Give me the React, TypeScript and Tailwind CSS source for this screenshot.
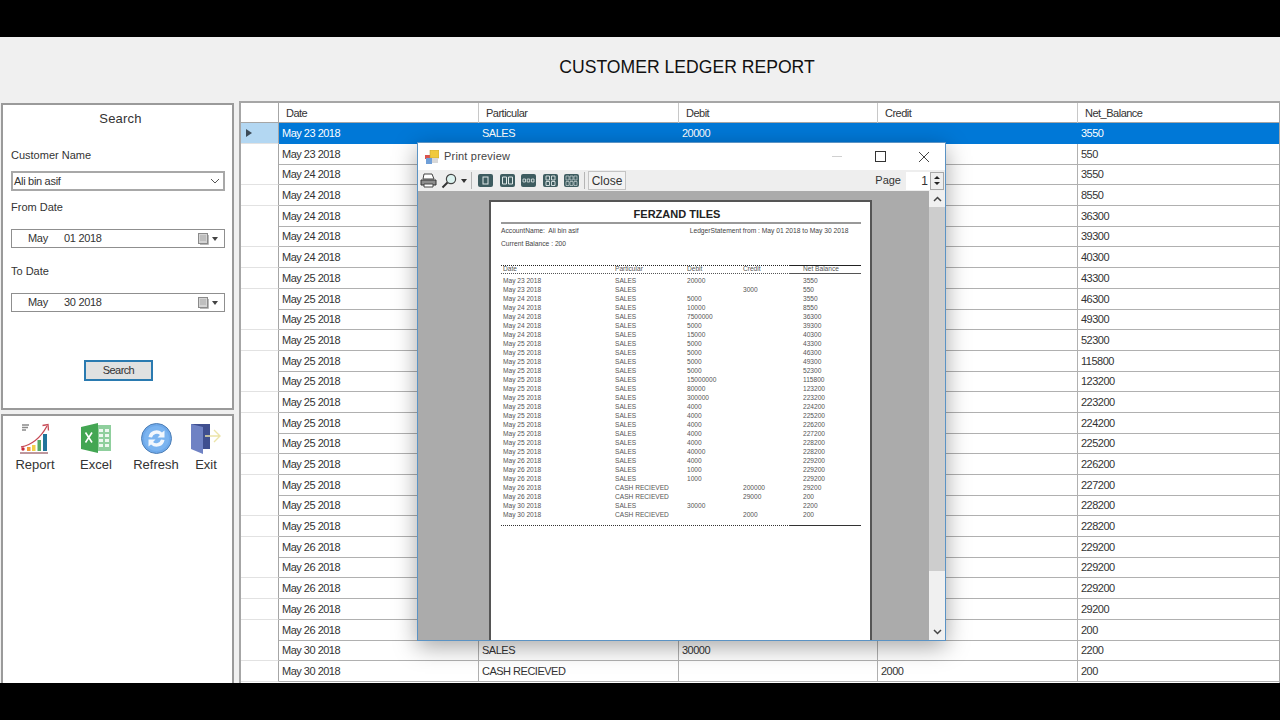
import React from "react";

const font = "font-['Liberation_Sans',Arial,sans-serif]";

type Row = { date: string; part: string; debit: string; credit: string; net: string };

const dates = [
  ...Array(2).fill("May 23 2018"),
  ...Array(5).fill("May 24 2018"),
  ...Array(13).fill("May 25 2018"),
  ...Array(5).fill("May 26 2018"),
  ...Array(2).fill("May 30 2018"),
];
const debits = ["20000", "", "5000", "10000", "7500000", "5000", "15000", "5000", "5000", "5000", "5000", "15000000", "80000", "300000", "4000", "4000", "4000", "4000", "4000", "40000", "4000", "1000", "1000", "", "", "30000", ""];
const credits: Record<number, string> = { 1: "3000", 23: "200000", 24: "29000", 26: "2000" };
const nets = ["3550", "550", "3550", "8550", "36300", "39300", "40300", "43300", "46300", "49300", "52300", "115800", "123200", "223200", "224200", "225200", "226200", "227200", "228200", "228200", "229200", "229200", "229200", "29200", "200", "2200", "200"];

const rows: Row[] = dates.map((date, i) => ({
  date,
  part: i === 23 || i === 24 || i === 26 ? "CASH RECIEVED" : "SALES",
  debit: debits[i],
  credit: credits[i] || "",
  net: nets[i],
}));

// rows 1..24 of the grid sit behind the print preview window
const isCovered = (i: number) => i > 0 && i < 25;

const gridCols = "grid grid-cols-[38px_200px_200px_199px_200px_201px]";

function CalendarButton() {
  return (
    <div className="ml-auto mr-[6px] flex items-center gap-[3px]">
      <svg width="11" height="12" viewBox="0 0 11 12">
        <rect x="0.5" y="0.5" width="9" height="10" fill="#d4d4d4" stroke="#8a8a8a" />
        <path d="M2 3h6M2 5h6M2 7h6" stroke="#a8a8a8" />
        <path d="M10.5 2v9.5H2" fill="none" stroke="#b8b8b8" />
      </svg>
      <div className="w-0 h-0 border-x-[3.5px] border-x-transparent border-t-[4px] border-t-[#444]" />
    </div>
  );
}

function DateField({ month, rest }: { month: string; rest: string }) {
  return (
    <div className="ml-[8px] mr-[7px] mt-[15px] h-[19px] border border-[#8f8f8f] bg-white flex items-center text-[11px] tracking-[-0.3px] text-[#333]">
      <span className="ml-[16px] w-[36px]">{month}</span>
      <span>{rest}</span>
      <CalendarButton />
    </div>
  );
}

function ReportIcon() {
  return (
    <svg width="32" height="32" viewBox="0 0 32 32">
      <path d="M3 3h7M3 5.5h6M3 8h4" stroke="#8b8b8b" strokeWidth="1.4" />
      <path d="M2 25C12 23 21 17 28 4" fill="none" stroke="#c64a55" strokeWidth="1.3" />
      <path d="M23.5 3.5L29 2.5L29.5 8.5" fill="none" stroke="#c64a55" strokeWidth="1.3" />
      <circle cx="4" cy="27" r="1.7" fill="#c9283a" />
      <rect x="8" y="25" width="3.5" height="4" fill="#ef9b3a" />
      <rect x="13" y="23" width="3.5" height="6" fill="#f2cf4a" />
      <rect x="18.5" y="18" width="3.5" height="11" fill="#55a866" />
      <rect x="24" y="12" width="4" height="17" fill="#21759b" />
      <path d="M1 31h28" stroke="#7c2f3a" strokeWidth="1" />
    </svg>
  );
}

function ExcelIcon() {
  return (
    <svg width="32" height="30" viewBox="0 0 32 30">
      <path d="M16 2h15v26H16z" fill="#8fcf9d" />
      <path d="M19 6h4v3h-4zM25 6h4v3h-4zM19 11h4v3h-4zM25 11h4v3h-4zM19 16h4v3h-4zM25 16h4v3h-4zM19 21h4v3h-4zM25 21h4v3h-4z" fill="#eef8f0" />
      <path d="M1 4L18 0v30L1 26z" fill="#43a653" />
      <path d="M5.5 9.5l6.5 10M12 9.5l-6.5 10" stroke="#fff" strokeWidth="1.6" />
    </svg>
  );
}

function RefreshIcon() {
  return (
    <svg width="31" height="31" viewBox="0 0 31 31">
      <circle cx="15.5" cy="15.5" r="15" fill="#6ea9ea" stroke="#4f7fb5" />
      <circle cx="15.5" cy="15.5" r="12.5" fill="#7bb4f0" />
      <path d="M7.5 14A8 8 0 0 1 21 9.5L23.5 7.5V14.5H16.5L19 12A5 5 0 0 0 11 14.5z" fill="#f2f7fd" />
      <path d="M23.5 17A8 8 0 0 1 10 21.5L7.5 23.5V16.5H14.5L12 19A5 5 0 0 0 20 16.5z" fill="#f2f7fd" />
    </svg>
  );
}

function ExitIcon() {
  return (
    <svg width="32" height="31" viewBox="0 0 32 31">
      <path d="M1 1h19v25H13z" fill="#3f4f8f" />
      <path d="M1 1l12 3v27L1 26z" fill="#6f82c4" />
      <path d="M15 13h15M24 7l6 6-6 6" fill="none" stroke="#ece4a8" strokeWidth="1.4" />
    </svg>
  );
}

function ToolIcon({ children }: { children: React.ReactNode }) {
  return (
    <svg width="15" height="13" viewBox="0 0 15 13">
      <rect width="15" height="13" rx="2" fill="#3e5c60" />
      {children}
    </svg>
  );
}

function PrintPreview() {
  const repCols = "grid grid-cols-[112px_72px_56px_60px_58px]";
  return (
    <div className="absolute left-[176px] top-[39px] w-[529px] h-[499px] bg-white border border-[#5b93c4] shadow-[0_6px_22px_rgba(0,0,0,0.35)] flex flex-col tracking-normal">
      {/* title bar */}
      <div className="h-[27px] flex items-center shrink-0">
        <svg className="ml-[7px]" width="14" height="14" viewBox="0 0 14 14">
          <rect x="0" y="5" width="6" height="4" fill="#d9534f" />
          <rect x="5" y="0" width="9" height="8" fill="#f0c93c" stroke="#b99a2e" strokeWidth="0.5" />
          <rect x="1" y="8" width="6" height="6" fill="#6f9fd8" />
          <rect x="7" y="8" width="6" height="5" fill="#d8d8d8" />
        </svg>
        <span className="ml-[5px] text-[11px] tracking-[0.2px] text-[#444]">Print preview</span>
        <div className="ml-auto mr-[33px] w-[10px] h-px bg-[#d0d0d0]" />
        <div className="mr-[32px] w-[11px] h-[11px] border border-[#333]" />
        <svg className="mr-[15px]" width="12" height="12" viewBox="0 0 12 12">
          <path d="M1 1l10 10M11 1L1 11" stroke="#444" strokeWidth="1" />
        </svg>
      </div>
      {/* toolbar */}
      <div className="h-[21px] bg-[#eeeeee] flex items-center shrink-0 text-[12px] text-[#333]">
        <svg className="ml-[2px]" width="17" height="15" viewBox="0 0 17 15">
          <path d="M4 1h8l2 5H3z" fill="#fff" stroke="#444" />
          <path d="M1 7h15v5H1z" fill="#8d8d8d" stroke="#333" />
          <path d="M4 11h9v3H4z" fill="#fff" stroke="#444" />
        </svg>
        <svg className="ml-[4px]" width="16" height="16" viewBox="0 0 16 16">
          <circle cx="10" cy="6" r="4.6" fill="#dcf2ef" stroke="#444" strokeWidth="1.2" />
          <path d="M6.5 9.5L1.5 14.5" stroke="#333" strokeWidth="2" />
        </svg>
        <div className="ml-[4px] w-0 h-0 border-x-[3.5px] border-x-transparent border-t-[4px] border-t-[#333]" />
        <div className="ml-[4px] w-px h-[17px] bg-[#b5b5b5]" />
        <div className="ml-[6px] flex gap-[6.500px]">
          <ToolIcon><rect x="5" y="3" width="5" height="7" fill="none" stroke="#dfe8e8" /></ToolIcon>
          <ToolIcon><path d="M2.5 3h4v7h-4zM8.5 3h4v7h-4z" fill="none" stroke="#dfe8e8" /></ToolIcon>
          <ToolIcon><path d="M2 5h2.500v3H2zM6.200 5h2.500v3H6.200zM10.500 5H13v3h-2.500z" fill="none" stroke="#dfe8e8" strokeWidth="0.8" /></ToolIcon>
          <ToolIcon><path d="M3 2h3.500v4H3zM8.500 2H12v4H8.500zM3 7.500h3.500v4H3zM8.500 7.500H12v4H8.500z" fill="none" stroke="#dfe8e8" strokeWidth="0.9" /></ToolIcon>
          <ToolIcon><path d="M2 2h3v4H2zM6 2h3v4H6zM10 2h3v4h-3zM2 7.500h3v4H2zM6 7.500h3v4H6zM10 7.500h3v4h-3z" fill="none" stroke="#dfe8e8" strokeWidth="0.6" /></ToolIcon>
        </div>
        <div className="ml-[5px] w-px h-[17px] bg-[#b5b5b5]" />
        <div className="ml-[3px] w-[38px] h-[19px] border border-[#c4c4c4] bg-[#f3f3f3] flex items-center justify-center">Close</div>
        <span className="ml-auto text-[11px]">Page</span>
        <div className="ml-[5px] w-[24px] h-[18px] bg-white flex items-center justify-end pr-[2px]">1</div>
        <div className="mr-[1px] w-[14px] h-[18px] border border-[#a8a8a8] flex flex-col items-center justify-around py-[2px]">
          <div className="w-0 h-0 border-x-[3px] border-x-transparent border-b-[3px] border-b-[#222]" />
          <div className="w-0 h-0 border-x-[3px] border-x-transparent border-t-[3px] border-t-[#222]" />
        </div>
      </div>
      {/* preview area */}
      <div className="flex-1 min-h-0 bg-[#ababab] flex">
        <div className="ml-[71px] mt-[9px] w-[383px] bg-white border-l-2 border-t-2 border-r-2 border-[#555] pl-[10px] pr-[9px] text-[#444]">
          <div className="h-[20px] pr-[8px] flex items-end justify-center text-[11px] font-bold text-[#222]">FERZAND TILES</div>
          <div className="h-[2px] bg-[#999]" />
          <div className="mt-[3px] flex text-[6.700px] h-[8px] leading-[8px] whitespace-nowrap">
            <span>AccountName:&nbsp; Ali bin asif</span>
            <span className="ml-[111px]">LedgerStatement from : May 01 2018 to May 30 2018</span>
          </div>
          <div className="mt-[5px] text-[6.700px] h-[8px] leading-[8px]">Current Balance : 200</div>
          <div className="mt-[17px] flex">
            <div className="w-[289px] border-t border-dotted border-[#222]" />
            <div className="flex-1 border-t border-[#222]" />
          </div>
          <div className={`${repCols} pl-[2px] h-[7px] text-[6.600px] leading-[6px] text-[#555]`}>
            <span>Date</span>
            <span>Particular</span>
            <span>Debit</span>
            <span>Credit</span>
            <span>Net Balance</span>
          </div>
          <div className="flex">
            <div className="w-[289px] border-t border-dotted border-[#555]" />
            <div className="flex-1 border-t border-[#555]" />
          </div>
          <div className="mt-[2px] pl-[2px] text-[6.600px] text-[#555]">
            {rows.map((r, i) => (
              <div key={i} className={`${repCols} h-[9px] leading-[9px] whitespace-nowrap`}>
                <span>{r.date}</span>
                <span>{r.part}</span>
                <span>{r.debit}</span>
                <span>{r.credit}</span>
                <span>{r.net}</span>
              </div>
            ))}
          </div>
          <div className="mt-[6px] flex">
            <div className="w-[289px] border-t border-dotted border-[#333]" />
            <div className="flex-1 border-t border-[#333]" />
          </div>
        </div>
        {/* scroll bar */}
        <div className="ml-auto w-[16px] bg-[#f0f0f0] flex flex-col items-center">
          <svg className="my-[5px]" width="9" height="6" viewBox="0 0 9 6">
            <path d="M1 5l3.500-3.500L8 5" fill="none" stroke="#444" strokeWidth="1.5" />
          </svg>
          <div className="w-full h-[364px] bg-[#cdcdcd]" />
          <svg className="mt-auto mb-[5px]" width="9" height="6" viewBox="0 0 9 6">
            <path d="M1 1l3.500 3.500L8 1" fill="none" stroke="#444" strokeWidth="1.5" />
          </svg>
        </div>
      </div>
    </div>
  );
}

function LedgerGrid() {
  return (
    <div className="relative flex-1 mt-[3px] border-l-2 border-t-2 border-r border-[#a6a6a6] bg-white text-[11px] tracking-[-0.5px] text-[#333]">
      <div className={`${gridCols} h-[20px] items-center border-b border-[#a6a6a6]`}>
        <div className="h-full border-r border-[#a6a6a6]" />
        <div className="h-full border-r border-[#c8c8c8] pl-[7px] leading-[20px]">Date</div>
        <div className="h-full border-r border-[#c8c8c8] pl-[7px] leading-[20px]">Particular</div>
        <div className="h-full border-r border-[#c8c8c8] pl-[7px] leading-[20px]">Debit</div>
        <div className="h-full border-r border-[#c8c8c8] pl-[7px] leading-[20px]">Credit</div>
        <div className="h-full pl-[7px] leading-[20px]">Net_Balance</div>
      </div>
      {rows.map((r, i) => {
        const sel = i === 0;
        const covered = isCovered(i);
        const cell = `border-r border-b pl-[3px] whitespace-nowrap ${sel ? "bg-[#0078d7] text-white border-[#0078d7]" : "border-[#b0b0b0]"}`;
        return (
          <div key={i} className={`${gridCols} h-[20.7px] leading-[20px]`}>
            <div className={`border-r border-r-[#a6a6a6] border-b border-b-[#e2e2e2] flex items-center pl-[5px] ${sel ? "bg-[#b3d7f2]" : "bg-white"}`}>
              {sel && <div className="w-0 h-0 border-y-[4px] border-y-transparent border-l-[6px] border-l-[#3b4a57]" />}
            </div>
            <div className={cell}>{r.date}</div>
            <div className={cell}>{!covered && r.part}</div>
            <div className={cell}>{!covered && r.debit}</div>
            <div className={cell}>{!covered && r.credit}</div>
            <div className={`${cell} border-r-0`}>{r.net}</div>
          </div>
        );
      })}
      <PrintPreview />
    </div>
  );
}

function SearchPanel() {
  return (
    <div className="h-[307px] mt-[5px] border-2 border-[#9a9a9a] bg-white text-[#333]">
      <div className="pl-[6px] text-center text-[13px] tracking-[0.2px] mt-[6px] leading-[16px]">Search</div>
      <div className="ml-[8px] mt-[21px] text-[11px] leading-[14px]">Customer Name</div>
      <div className="ml-[8px] mr-[7px] mt-[9px] h-[20px] border-2 border-[#a8a8a8] flex items-center text-[11px] tracking-[-0.3px] pl-[1px]">
        Ali bin asif
        <svg className="ml-auto mr-[3px]" width="10" height="6" viewBox="0 0 10 6">
          <path d="M1 1l4 4 4-4" fill="none" stroke="#555" />
        </svg>
      </div>
      <div className="ml-[8px] mt-[9px] text-[11px] leading-[14px]">From Date</div>
      <DateField month="May" rest="01 2018" />
      <div className="ml-[8px] mt-[16px] text-[11px] leading-[14px]">To Date</div>
      <DateField month="May" rest="30 2018" />
      <div className="mt-[48px] ml-[81px] w-[69px] h-[21px] border-2 border-[#2a7ab0] bg-[#e1e1e1] flex items-center justify-center text-[11px] tracking-[-0.6px]">Search</div>
    </div>
  );
}

function ActionPanel() {
  const items = [
    { label: "Report", w: "w-[60px]", icon: <ReportIcon /> },
    { label: "Excel", w: "w-[62px]", icon: <ExcelIcon /> },
    { label: "Refresh", w: "w-[58px]", icon: <RefreshIcon /> },
    { label: "Exit", w: "w-[42px]", icon: <ExitIcon /> },
  ];
  return (
    <div className="flex-1 mt-[4px] border-2 border-b-0 border-[#9a9a9a] bg-white flex items-start pl-[2px] pt-[6px] text-[#333]">
      {items.map((it) => (
        <div key={it.label} className={`${it.w} flex flex-col items-center`}>
          <div className="h-[32px] flex items-center">{it.icon}</div>
          <span className="mt-[3px] text-[13px] leading-[16px]">{it.label}</span>
        </div>
      ))}
    </div>
  );
}

export default function App() {
  return (
    <div className={`w-[1280px] h-[720px] overflow-hidden bg-black flex flex-col ${font}`}>
      <div className="h-[37px] shrink-0" />
      <div className="h-[61px] shrink-0 bg-[#f0f0f0] flex items-center justify-center pl-[94px] text-[17.600px] text-[#111]">
        CUSTOMER LEDGER REPORT
      </div>
      <div className="h-[585px] shrink-0 bg-[#f0f0f0] flex overflow-hidden">
        <div className="w-[233px] ml-px shrink-0 flex flex-col">
          <SearchPanel />
          <ActionPanel />
        </div>
        <div className="w-[5px] shrink-0" />
        <LedgerGrid />
      </div>
    </div>
  );
}
